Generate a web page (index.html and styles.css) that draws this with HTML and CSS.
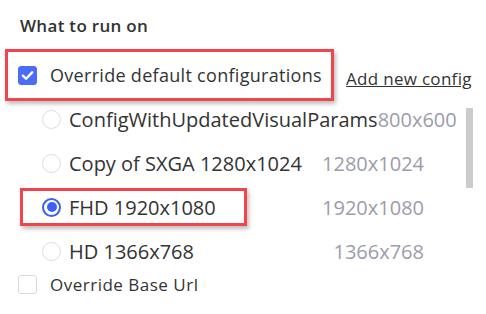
FILE: index.html
```html
<!DOCTYPE html>
<html>
<head>
<meta charset="utf-8">
<link rel="stylesheet" href="styles.css">
</head>
<body>
<div class="panel">
  <h2 class="title">What to run on</h2>
  <div class="top-row">
    <label class="override hl">
      <span class="checkbox checked">
        <svg viewBox="0 0 20 20" width="19" height="19"><path d="M4.5 10.2 L8.3 13.8 L15.5 6.3" fill="none" stroke="#fff" stroke-width="2.8" stroke-linecap="round" stroke-linejoin="round"/></svg>
      </span>
      <span class="label-text">Override default configurations</span>
    </label>
    <a class="add-link">Add new config</a>
  </div>
  <div class="list">
    <div class="row">
      <span class="radio"></span>
      <span class="name">ConfigWithUpdatedVisualParams</span>
      <span class="size">800x600</span>
    </div>
    <div class="row">
      <span class="radio"></span>
      <span class="name">Copy of SXGA 1280x1024</span>
      <span class="size">1280x1024</span>
    </div>
    <div class="row">
      <div class="sel hl">
        <span class="radio on"></span>
        <span class="name">FHD 1920x1080</span>
      </div>
      <span class="size">1920x1080</span>
    </div>
    <div class="row">
      <span class="radio"></span>
      <span class="name">HD 1366x768</span>
      <span class="size">1366x768</span>
    </div>
    <div class="thumb"></div>
  </div>
  <label class="base">
    <span class="checkbox"></span>
    <span class="base-text">Override Base Url</span>
  </label>
</div>
</body>
</html>
```
FILE: styles.css
```css
* { box-sizing: border-box; }
html, body { margin: 0; padding: 0; background: #fff; overflow: hidden; }
body { font-family: "Open Sans", "Lato", sans-serif; color: #333; }
.panel { width: 486px; height: 314px; padding: 13px 0 0 0; }
.title { margin: 0 0 0 20px; font-size: 17px; font-weight: 600; color: #333; line-height: 26px; letter-spacing: 0.3px; }
.top-row { display: flex; align-items: center; margin-top: 10px; }
.hl { border: 3px solid #f2444b; box-shadow: 2px 3px 4px rgba(0,0,0,0.25); }
.override { display: flex; align-items: center; margin-left: 5px; width: 329px; height: 52px; padding-left: 10px; }
.checkbox { width: 19px; height: 19px; border-radius: 3px; border: 1px solid #d9d9e3; display: inline-flex; align-items: center; justify-content: center; flex: none; }
.checkbox.checked { background: #4b6cf6; border-color: #4b6cf6; }
.checkbox svg { display: block; }
.label-text { margin-left: 13px; font-size: 18px; color: #333; letter-spacing: 0.3px; white-space: nowrap; }
.add-link { margin-left: 12px; margin-top: 6px; font-size: 17px; color: #333; text-decoration: underline; white-space: nowrap; letter-spacing: 0.3px; }
.list { position: relative; height: 172px; margin-top: -4px; }
.row { display: flex; align-items: center; height: 44px; width: 424px; padding-left: 42px; font-size: 20px; }
.radio { width: 19px; height: 19px; border-radius: 50%; border: 1px solid #dcdce6; flex: none; display: inline-flex; align-items: center; justify-content: center; }
.radio.on { border: 2px solid #3e5ff5; }
.radio.on::after { content: ""; width: 10px; height: 10px; border-radius: 50%; background: #3e5ff5; }
.name { margin-left: 8px; white-space: nowrap; flex: none; color: #333; }
.size { margin-left: auto; flex: none; color: #9c9cab; white-space: nowrap; }
.row .sel { display: flex; align-items: center; margin-left: -22px; padding-left: 19px; width: 227px; height: 38px; }
.thumb { position: absolute; left: 466px; top: 11px; width: 7px; height: 80px; background: #cccccc; }
.base { display: flex; align-items: center; margin-left: 18px; margin-top: 4px; }
.base-text { margin-left: 13px; font-size: 17px; color: #333; letter-spacing: 0.5px; }
```
